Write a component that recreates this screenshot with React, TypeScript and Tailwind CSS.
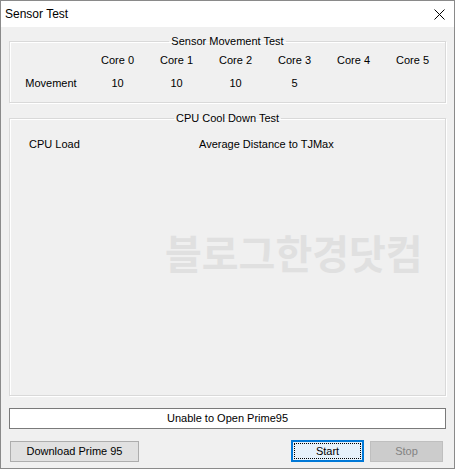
const CORES = ["Core 0", "Core 1", "Core 2", "Core 3", "Core 4", "Core 5"];
const MOVEMENT = ["10", "10", "10", "5", "", ""];

function GroupBox({
  title,
  className,
  children,
}: {
  title: string;
  className?: string;
  children: React.ReactNode;
}) {
  return (
    <fieldset
      className={
        "border border-[#d9d9d9] shadow-[inset_1px_1px_0_#fff,1px_1px_0_#fff] px-0 pb-0 m-0 min-w-0 " +
        (className ?? "")
      }
    >
      <legend className="mx-auto px-[2px] text-[11px] leading-[16px] text-black">
        {title}
      </legend>
      {children}
    </fieldset>
  );
}

export default function App() {
  return (
    <div
      className="w-[455px] h-[469px] flex flex-col bg-[#f0f0f0] border border-[#8a8a8a] text-black text-[11px] overflow-hidden"
      style={{ fontFamily: '"Liberation Sans", "Noto Sans CJK KR", sans-serif' }}
    >
      <div className="h-[26px] shrink-0 bg-white flex items-center justify-between pl-[4px] pr-[9px]">
        <span className="text-[12px] leading-none">Sensor Test</span>
        <svg viewBox="0 0 11 11" className="w-[11px] h-[11px]">
          <path d="M0.5 0.5 L10.5 10.5 M10.5 0.5 L0.5 10.5" stroke="#000" strokeWidth="1" fill="none" />
        </svg>
      </div>

      <div className="flex-1 flex flex-col px-[8px] pt-[6px]">
        <GroupBox title="Sensor Movement Test" className="h-[70px]">
          <div className="grid grid-cols-[78px_repeat(6,59px)] text-center leading-[16px] pt-[3px]">
            <div />
            {CORES.map((c) => (
              <div key={c}>{c}</div>
            ))}
            <div className="mt-[7px] pl-[4px]">Movement</div>
            {MOVEMENT.map((m, i) => (
              <div key={i} className="mt-[7px]">
                {m}
              </div>
            ))}
          </div>
        </GroupBox>

        <GroupBox title="CPU Cool Down Test" className="mt-[7px] h-[286px]">
          <div className="flex leading-[16px] pt-[10px]">
            <span className="pl-[19px] w-[189px]">CPU Load</span>
            <span>Average Distance to TJMax</span>
          </div>
          <div
            className="pl-[155px] pt-[78px] text-[40px] leading-[44px] font-bold text-[#e0e0e0]"
            style={{ fontFamily: '"Noto Sans CJK KR", sans-serif' }}
          >
            블로그한경닷컴
          </div>
        </GroupBox>

        <div className="mt-[12px] h-[21px] bg-white border border-[#7a7a7a] flex items-center justify-center leading-none">
          Unable to Open Prime95
        </div>

        <div className="mt-[11px] flex items-center">
          <button className="ml-[1px] w-[129px] h-[21px] bg-[#e1e1e1] border border-[#adadad] text-[11px] leading-none">
            Download Prime 95
          </button>
          <button className="ml-auto w-[73px] h-[22px] bg-[#e5f1fb] border-2 border-[#0078d7] flex items-center justify-center p-[1px]">
            <span className="w-full h-full flex items-center justify-center border border-dotted border-black leading-none">
              Start
            </span>
          </button>
          <button
            disabled
            className="ml-[6px] mr-[3px] w-[73px] h-[21px] bg-[#cccccc] border border-[#bfbfbf] text-[#838383] leading-none"
          >
            Stop
          </button>
        </div>
      </div>
    </div>
  );
}
